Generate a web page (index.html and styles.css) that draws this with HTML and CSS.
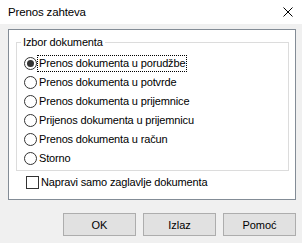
FILE: index.html
```html
<!DOCTYPE html>
<html lang="sr">
<head>
  <meta charset="UTF-8">
  <title>Prenos zahteva</title>
  <link rel="stylesheet" href="styles.css">
</head>
<body>
  <div class="dialog">
    <div class="titlebar">
      <span class="title">Prenos zahteva</span>
      <svg class="close" width="10" height="10" viewBox="0 0 10 10">
        <path d="M0.5 0.5 L9.5 9.5 M9.5 0.5 L0.5 9.5" stroke="#000" stroke-width="1" fill="none"/>
      </svg>
    </div>
    <div class="content">
      <div class="panel">
        <fieldset class="group">
          <legend>Izbor dokumenta</legend>
          <label class="option"><span class="radio checked"></span><span class="text focus">Prenos dokumenta u porudžbe</span></label>
          <label class="option"><span class="radio"></span><span class="text">Prenos dokumenta u potvrde</span></label>
          <label class="option"><span class="radio"></span><span class="text">Prenos dokumenta u prijemnice</span></label>
          <label class="option"><span class="radio"></span><span class="text">Prijenos dokumenta u prijemnicu</span></label>
          <label class="option"><span class="radio"></span><span class="text">Prenos dokumenta u račun</span></label>
          <label class="option"><span class="radio"></span><span class="text">Storno</span></label>
        </fieldset>
        <label class="option check"><span class="box"></span><span class="text">Napravi samo zaglavlje dokumenta</span></label>
      </div>
      <div class="buttons">
        <button class="btn">OK</button>
        <button class="btn">Izlaz</button>
        <button class="btn">Pomoć</button>
      </div>
    </div>
  </div>
</body>
</html>
```

FILE: styles.css
```css
body {
  margin: 0;
  background-color: #f0f0f0;
  font-family: "Liberation Sans", Arial, sans-serif;
  font-size: 11px;
  letter-spacing: -0.15px;
  color: #000;
}
.dialog {
  width: 302px;
  height: 243px;
  overflow: hidden;
}
.titlebar {
  height: 24px;
  background-color: #fff;
  display: flex;
  align-items: center;
  justify-content: space-between;
  padding: 0 9px 0 8px;
}
.title {
  font-size: 11.5px;
}
.close {
  display: block;
}
.content {
  padding: 5px 6px 0 8px;
}
.panel {
  box-sizing: border-box;
  width: 288px;
  height: 171px;
  border: 1px solid #838c96;
  background-color: #fff;
  padding: 4px 0 0 7px;
}
.group {
  box-sizing: border-box;
  width: 273px;
  margin: 0;
  border: 1px solid #dcdcdc;
  padding: 4px 0 2px 7px;
}
.group legend {
  padding: 0 2px;
  margin-left: -3px;
  line-height: 16px;
}
.option {
  display: flex;
  align-items: center;
  height: 19px;
  gap: 2px;
}
.radio {
  box-sizing: border-box;
  width: 13px;
  height: 13px;
  border: 1px solid #333;
  border-radius: 50%;
  display: flex;
  align-items: center;
  justify-content: center;
}
.radio.checked::after {
  content: "";
  width: 7px;
  height: 7px;
  border-radius: 50%;
  background-color: #333;
}
.text {
  line-height: 15px;
  padding: 0 1px;
  border: 1px dotted transparent;
  margin-left: -2px;
}
.text.focus {
  border-color: #000;
}
.check {
  margin: 2px 0 0 10px;
}
.box {
  box-sizing: border-box;
  width: 13px;
  height: 13px;
  border: 1px solid #333;
  background-color: #fff;
}
.buttons {
  display: flex;
  justify-content: flex-end;
  gap: 7px;
  margin-top: 13px;
}
.btn {
  width: 73px;
  height: 23px;
  background-color: #e1e1e1;
  border: 1px solid #adadad;
  font-family: inherit;
  font-size: 11px;
  color: #000;
  padding: 0;
}
```
